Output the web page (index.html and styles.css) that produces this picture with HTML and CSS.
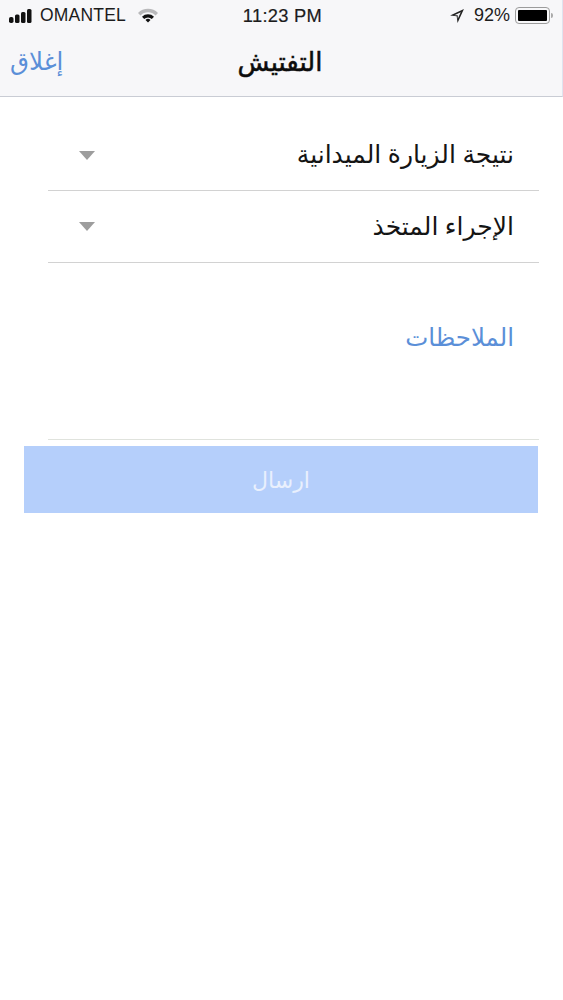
FILE: index.html
```html
<!DOCTYPE html>
<html lang="ar">
<head>
<meta charset="utf-8">
<title>التفتيش</title>
<link rel="stylesheet" href="styles.css">
</head>
<body>
<header class="top">
  <div class="status">
    <div class="status-side">
      <svg class="signal" width="25" height="14" viewBox="0 0 25 14"><rect x="0" y="8" width="4.500" height="6" rx="1.800"/><rect x="6" y="5.500" width="4.500" height="8.500" rx="1.500"/><rect x="12" y="3" width="4.500" height="11" rx="1.500"/><rect x="18" y="0" width="4.500" height="14" rx="1.500"/></svg>
      <span class="carrier">OMANTEL</span>
      <svg class="wifi" width="22" height="16" viewBox="0 0 22 16"><path d="M1 5 A14 14 0 0 1 21 5 L18.500 7.500 A10.500 10.500 0 0 0 3.500 7.500Z" fill="#b9b9bb"/><path d="M5 8.800 A8.500 8.500 0 0 1 17 8.800 L14.800 11 A5.500 5.500 0 0 0 7.200 11Z" fill="#111"/><path d="M8.500 12 A3.500 3.500 0 0 1 13.500 12 L11 14.500Z" fill="#111"/></svg>
    </div>
    <div class="time">11:23 PM</div>
    <div class="status-side status-right">
      <svg class="loc" width="16" height="16" viewBox="0 0 15 15"><path d="M14 1 L1 7 L7.200 7.800 L8 14Z M11 4 L5 6.800 L8.200 6.800 L8.200 10Z" fill="#222" fill-rule="evenodd"/></svg>
      <span class="pct">92%</span>
      <span class="battery"><span class="battery-fill"></span></span><span class="battery-tip"></span>
    </div>
  </div>
  <div class="nav">
    <span class="close">إغلاق</span>
    <h1 class="title">التفتيش</h1>
  </div>
</header>
<main class="form" dir="rtl">
  <div class="select"><span>نتيجة الزيارة الميدانية</span><i class="caret"></i></div>
  <div class="select"><span>الإجراء المتخذ</span><i class="caret"></i></div>
  <div class="notes"><span>الملاحظات</span></div>
  <button class="submit" type="button">ارسال</button>
</main>
</body>
</html>
```
FILE: styles.css
```css
* { box-sizing: border-box; }
html, body { margin: 0; padding: 0; background: #fff; }
body { width: 563px; height: 1000px; overflow: hidden; font-family: "Noto Sans", "DejaVu Sans", sans-serif; color: #111; }
.top { height: 97px; background: #f7f7f9; border-bottom: 1px solid #c9ccd4; border-right: 1px solid #dfe3ef; display: flex; flex-direction: column; }
.status { height: 31px; padding: 0 9px; display: flex; align-items: center; justify-content: space-between; font-family: "Liberation Sans", sans-serif; font-size: 17.500px; color: #1c1c1c; }
.status-side { display: flex; align-items: center; width: 180px; }
.status-right { justify-content: flex-end; }
.signal { fill: #111; flex: none; }
.carrier { margin-left: 6px; letter-spacing: .2px; }
.wifi { margin-left: 11px; flex: none; }
.time { font-size: 18.300px; letter-spacing: .3px; -webkit-text-stroke: .2px #1c1c1c; padding-left: 3px; }
.loc { margin-right: 9px; flex: none; }
.pct { margin-right: 5px; font-size: 18px; }
.battery { width: 35px; height: 17px; border: 1px solid #9c9c9c; border-radius: 4px; padding: 2px; display: block; }
.battery-fill { display: block; height: 100%; background: #000; border-radius: 1px; }
.battery-tip { width: 2px; height: 5px; background: #aaa; margin-left: 1px; border-radius: 0 2px 2px 0; }
.nav { flex: 1; position: relative; display: flex; align-items: center; justify-content: center; padding-bottom: 6px; padding-right: 2px; }
.title { margin: 0; font-size: 26px; line-height: 30px; font-weight: 400; color: #0c0c0c; -webkit-text-stroke: .5px #0c0c0c; }
.close { position: absolute; left: 10px; top: 15px; font-size: 24.500px; line-height: 30px; color: #5b8fd8; }
.form { display: flex; flex-direction: column; padding: 0 24px; }
.select { height: 72px; padding: 0 25px 0 31px; display: flex; align-items: center; justify-content: space-between; border-bottom: 1px solid #d2d2d2; font-size: 25px; line-height: 34px; color: #141414; margin-left: 24px; }
.select span { position: relative; top: -2px; }
.select:first-child { height: 94px; padding-top: 22px; }
.select:first-child .caret { margin-top: 2px; }
.caret { width: 0; height: 0; border-left: 8px solid transparent; border-right: 8px solid transparent; border-top: 9px solid #9d9d9d; }
.notes { height: 177px; padding: 57px 25px 0 0; border-bottom: 1px solid #e0e3dd; font-size: 24.500px; color: #5b8fd8; margin-left: 24px; }
.submit { display: block; margin: 6px 1px 0 0; height: 67px; border: 0; background: #b5cffb; color: #e9f0fd; font: 22px "Noto Sans", "DejaVu Sans", sans-serif; padding: 0 0 2px; }
```
